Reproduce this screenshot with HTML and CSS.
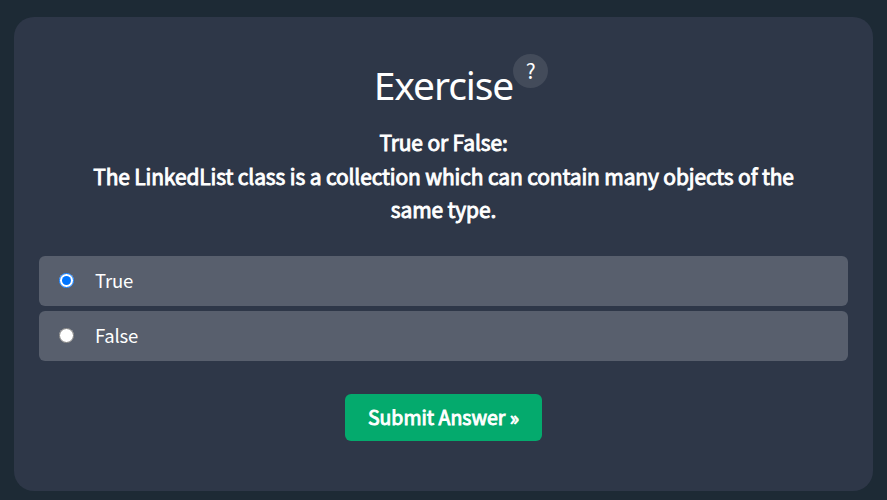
FILE: index.html
```html
<!DOCTYPE html>
<html lang="en">
<head>
<meta charset="utf-8">
<title>Exercise</title>
<link rel="stylesheet" href="styles.css">
</head>
<body>
<main class="card">
  <h2 class="title"><span class="word">Exercise</span><span class="help">?</span></h2>
  <p class="question">True or False:<br>The LinkedList class is a collection which can contain many objects of the<br>same type.</p>
  <form class="form">
    <label class="option"><input class="radio" type="radio" name="answer" checked><span class="label">True</span></label>
    <label class="option"><input class="radio" type="radio" name="answer"><span class="label">False</span></label>
    <button class="submit" type="button">Submit Answer »</button>
  </form>
</main>
</body>
</html>
```
FILE: styles.css
```css
* { box-sizing: border-box; }
body {
  margin: 0;
  height: 500px;
  padding: 17px 14px 9px;
  background: #1d2a35;
  color: #fff;
  overflow: hidden;
  font-family: "Noto Sans CJK SC", "Noto Sans", sans-serif;
}
.card {
  height: 474px;
  padding: 37px 25px 0;
  border-radius: 20px;
  background: #2e3748;
}
.title {
  display: flex;
  justify-content: center;
  align-items: flex-start;
  height: 72px;
  margin: 0;
  padding-left: 35px;
  font: 400 39px/62px "Noto Sans", "Open Sans", sans-serif;
}
.word { letter-spacing: -1.1px; }
.help {
  width: 35px;
  height: 34px;
  border-radius: 50%;
  background: #434b5a;
  font: 400 21px/32px "Noto Sans CJK SC", sans-serif;
  text-align: center;
}
.question {
  margin: 0 0 29px;
  font-size: 21px;
  font-weight: 400;
  -webkit-text-stroke: 0.9px #fff;
  line-height: 33.5px;
  letter-spacing: -0.14px;
  text-align: center;
  white-space: nowrap;
}
.form {
  display: flex;
  flex-direction: column;
  gap: 5px;
}
.option {
  display: flex;
  align-items: center;
  height: 50px;
  padding-left: 20px;
  border-radius: 6px;
  background: #585f6d;
  font-size: 18.5px;
  line-height: 28px;
  letter-spacing: -0.2px;
}
.label { padding-bottom: 2px; }
.radio {
  width: 15px;
  height: 15px;
  margin: 0 21px 0 0;
}
.submit {
  align-self: center;
  width: 197px;
  height: 47px;
  margin-top: 28px;
  padding: 0;
  border: 0;
  border-radius: 6px;
  background: #04aa6d;
  color: #fff;
  font: 400 19.5px/46px "Noto Sans CJK SC", sans-serif;
  -webkit-text-stroke: 0.9px #fff;
}
```
